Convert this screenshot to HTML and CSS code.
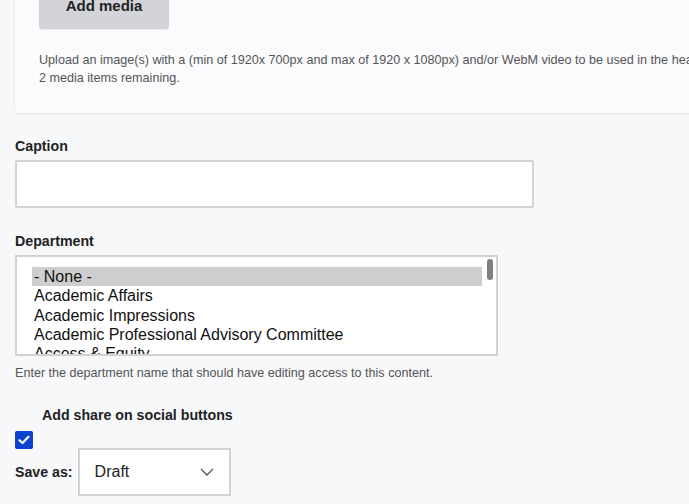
FILE: index.html
```html
<!DOCTYPE html>
<html lang="en">
<head>
    <meta charset="UTF-8">
    <meta name="viewport" content="width=device-width, initial-scale=1.0">
    <title>Edit content</title>
    <link rel="stylesheet" href="styles.css">
</head>
<body>

    <div class="media-card">
        <button class="media-button" type="button">Add media</button>
        <div class="media-help">
            <p>Upload an image(s) with a (min of 1920x 700px and max of 1920 x 1080px) and/or WebM video to be used in the header of the page.</p>
            <p>2 media items remaining.</p>
        </div>
    </div>

    <form class="edit-form">
        <div class="form-item">
            <label class="form-label" for="caption">Caption</label>
            <input class="text-input" id="caption" type="text">
        </div>

        <div class="form-item">
            <label class="form-label">Department</label>
            <div class="listbox">
                <ul class="listbox-options">
                    <li class="selected">- None -</li>
                    <li>Academic Affairs</li>
                    <li>Academic Impressions</li>
                    <li>Academic Professional Advisory Committee</li>
                    <li>Access &amp; Equity</li>
                    <li>Admissions</li>
                </ul>
                <span class="listbox-thumb"></span>
            </div>
            <p class="form-help">Enter the department name that should have editing access to this content.</p>
        </div>

        <div class="form-item">
            <span class="share-label">Add share on social buttons</span>
            <span class="checkbox">
                <svg width="12" height="10" viewBox="0 0 12 10"><path d="M1.5 5.2 L4.5 8 L10.5 1.8" fill="none" stroke="#fff" stroke-width="2.2" stroke-linecap="round" stroke-linejoin="round"/></svg>
            </span>
            <div class="save-row">
                <span class="form-label">Save as:</span>
                <div class="dropdown">
                    <span>Draft</span>
                    <svg width="14" height="8" viewBox="0 0 14 8"><path d="M1 1 L7 7 L13 1" fill="none" stroke="#555" stroke-width="1.3"/></svg>
                </div>
            </div>
        </div>
    </form>

</body>
</html>
```

FILE: styles.css
```css
body {
    font-family: 'Liberation Sans', Arial, sans-serif;
    margin: 0;
    padding: 0;
    background: #f7f8fa;
    color: #222;
    overflow: hidden;
}

/* Tarjeta de medios, recortada arriba y a la derecha */
.media-card {
    width: 900px;
    margin: -30px 0 0 15px;
    padding: 11px 24px 26px;
    background: #fbfbfd;
    box-shadow: 0 1px 3px rgba(0, 0, 0, 0.09);
    border-radius: 0 0 0 3px;
}

.media-button {
    display: block;
    width: 130px;
    height: 48px;
    border: none;
    border-radius: 3px;
    background: #d3d4d9;
    box-shadow: 0 1px 1px rgba(0, 0, 0, 0.08);
    font-family: inherit;
    font-size: 15px;
    font-weight: bold;
    color: #222;
}

.media-help {
    margin-top: 22px;
    font-size: 12.6px;
    line-height: 18px;
    color: #555;
    white-space: nowrap;
}

.media-help p {
    margin: 0;
}

.edit-form {
    padding: 25px 15px 0;
}

.form-item {
    margin-bottom: 25px;
}

.form-label {
    display: block;
    font-size: 14.2px;
    font-weight: bold;
    line-height: 17px;
    margin-bottom: 5px;
}

.text-input {
    display: block;
    box-sizing: border-box;
    width: 519px;
    height: 48px;
    margin: 0;
    border: 2px solid #d2d2d2;
    border-radius: 2px;
    background: #fff;
}

.listbox {
    position: relative;
    box-sizing: border-box;
    width: 483px;
    height: 101px;
    border: 2px solid #d2d2d2;
    background: #fff;
    overflow: hidden;
}

.listbox-options {
    list-style: none;
    margin: 0;
    padding: 10px 14px 0 15px;
    font-size: 16px;
    line-height: 19.25px;
    color: #111;
}

.listbox-options li {
    padding-left: 2px;
}

.listbox-options .selected {
    background: #cecece;
}

.listbox-thumb {
    position: absolute;
    top: 2px;
    right: 3px;
    width: 6px;
    height: 21px;
    border-radius: 3px;
    background: #808080;
}

.form-help {
    margin: 8px 0 0;
    font-size: 12.6px;
    line-height: 18px;
    color: #555;
}

.share-label {
    display: block;
    padding-left: 27px;
    font-size: 14.2px;
    font-weight: bold;
    line-height: 17px;
}

.checkbox {
    display: flex;
    align-items: center;
    justify-content: center;
    width: 18px;
    height: 18px;
    margin-top: 7px;
    border-radius: 2px;
    background: #0b43d1;
}

.save-row {
    display: flex;
    align-items: center;
    gap: 5px;
    margin-top: -1px;
}

.save-row .form-label {
    margin: 0;
}

.dropdown {
    box-sizing: border-box;
    width: 153px;
    height: 48px;
    display: flex;
    align-items: center;
    justify-content: space-between;
    padding: 0 15px 0 15px;
    border: 2px solid #d2d2d2;
    background: #fff;
    font-size: 16px;
    color: #222;
}
```
